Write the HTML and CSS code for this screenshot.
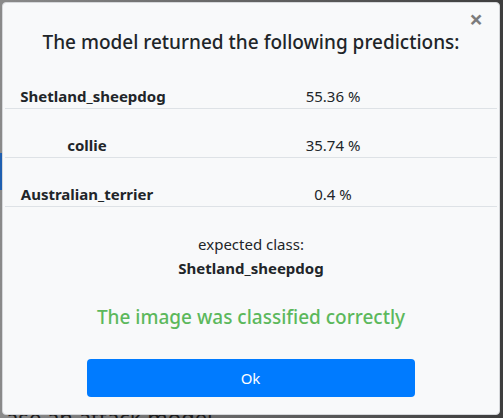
FILE: index.html
```html
<!DOCTYPE html>
<html>
<head>
<meta charset="utf-8">
<link rel="stylesheet" href="styles.css">
</head>
<body>
<div class="backdrop">
  <div class="under-bar"></div>
  <div class="under-text">ase an attack model</div>
</div>
<div class="modal">
  <button class="close" type="button">×</button>
  <h5 class="title">The model returned the following predictions:</h5>
  <div class="table">
    <div class="row"><div class="name name-wide">Shetland_sheepdog</div><div class="pct">55.36 %</div></div>
    <div class="row"><div class="name">collie</div><div class="pct">35.74 %</div></div>
    <div class="row"><div class="name">Australian_terrier</div><div class="pct">0.4 %</div></div>
  </div>
  <div class="expected">
    <div>expected class:</div>
    <div class="bold">Shetland_sheepdog</div>
  </div>
  <p class="result">The image was classified correctly</p>
  <div class="footer"><button class="ok" type="button">Ok</button></div>
</div>
</body>
</html>
```
FILE: styles.css
```css
html, body {
  margin: 0;
  padding: 0;
}
body {
  width: 503px;
  height: 418px;
  overflow: hidden;
  position: relative;
  font-family: "Noto Sans", "Open Sans", sans-serif;
  color: #212529;
  background: #5a5a5a;
}
.backdrop {
  position: absolute;
  inset: 0;
  background: linear-gradient(90deg, #8a8a8a 0, #6a6a6a 40%, #3e3e3e 100%);
}
.under-bar {
  position: absolute;
  left: 0;
  top: 153px;
  width: 3px;
  height: 37px;
  background: #1f5fb0;
}
.under-text {
  position: absolute;
  left: 6px;
  top: 404px;
  font-size: 22px;
  line-height: 26px;
  color: #1a1a1a;
}
.modal {
  position: absolute;
  left: 2px;
  top: 2px;
  width: 496px;
  height: 411px;
  background: #f8f9fa;
  border: 1px solid #d6d8db;
  border-radius: 4px;
  box-sizing: content-box;
  display: flex;
  flex-direction: column;
  padding: 0;
}
.close {
  position: absolute;
  right: 16px;
  top: 4px;
  border: 0;
  background: none;
  font-family: "Noto Sans", sans-serif;
  font-size: 24px;
  font-weight: 700;
  line-height: 1;
  color: #000;
  opacity: 0.5;
  padding: 0;
}
.title {
  margin: 24px 0 0;
  font-size: 19px;
  font-weight: 500;
  line-height: 30px;
  text-align: center;
}
.table {
  margin: 3px 2px 0;
  display: flex;
  flex-direction: column;
}
.row {
  display: grid;
  grid-template-columns: 164px 1fr;
  height: 48px;
  border-bottom: 1px solid #dee2e6;
  align-items: end;
  font-size: 15px;
  line-height: 24px;
}
.name {
  font-weight: 700;
  text-align: center;
  white-space: nowrap;
}
.name-wide {
  padding-left: 12px;
}
.pct {
  text-align: center;
}
.expected {
  margin-top: 25px;
  text-align: center;
  font-size: 15px;
  line-height: 24px;
}
.bold {
  font-weight: 700;
}
.result {
  margin: 22px 0 0;
  text-align: center;
  color: #5cb85c;
  font-size: 19px;
  font-weight: 500;
  line-height: 30px;
}
.footer {
  margin-top: 27px;
  display: flex;
  justify-content: center;
}
.ok {
  width: 328px;
  height: 38px;
  margin-right: 1px;
  background: #007bff;
  color: #fff;
  border: 0;
  border-radius: 4px;
  font-family: "Noto Sans", sans-serif;
  font-size: 15px;
}
```
